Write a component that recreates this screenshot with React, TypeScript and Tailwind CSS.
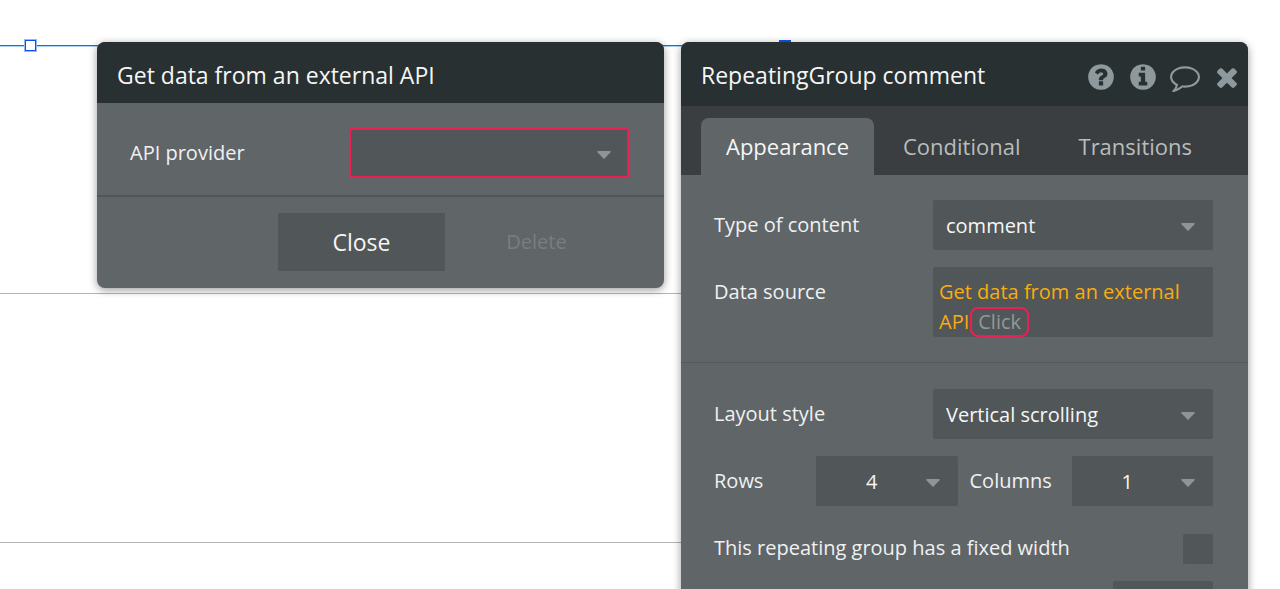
import type { ReactNode } from "react";

const ICONS = {
  help: "M1024 1376v-192q0-14-9-23t-23-9h-192q-14 0-23 9t-9 23v192q0 14 9 23t23 9h192q14 0 23-9t9-23zm256-672q0-88-55.5-163t-138.5-116-170-41q-243 0-371 213-15 24 8 42l132 100q7 6 19 6 16 0 25-12 53-68 86-92 34-24 86-24 48 0 85.5 26t37.5 59q0 38-20 61t-68 45q-63 28-115.5 86.5t-52.5 125.5v36q0 14 9 23t23 9h192q14 0 23-9t9-23q0-19 21.5-49.5t54.5-49.5q32-18 49-28.5t46-35 44.5-48 28-60.5 12.5-81zm384 192q0 209-103 385.5t-279.5 279.5-385.5 103-385.5-103-279.5-279.5-103-385.5 103-385.5 279.5-279.5 385.5-103 385.5 103 279.5 279.5 103 385.5z",
  info: "M1152 1376v-160q0-14-9-23t-23-9h-96v-512q0-14-9-23t-23-9h-320q-14 0-23 9t-9 23v160q0 14 9 23t23 9h96v320h-96q-14 0-23 9t-9 23v160q0 14 9 23t23 9h448q14 0 23-9t9-23zm-128-896v-160q0-14-9-23t-23-9h-192q-14 0-23 9t-9 23v160q0 14 9 23t23 9h192q14 0 23-9t9-23zm640 416q0 209-103 385.5t-279.5 279.5-385.5 103-385.5-103-279.5-279.5-103-385.5 103-385.5 279.5-279.5 385.5-103 385.5 103 279.5 279.5 103 385.5z",
  comment:
    "M896 384q-204 0-381.5 69.5t-282 187.5-104.5 255q0 112 71.5 213.5t201.5 175.5l87 50-27 96q-24 91-70 172 152-63 275-171l43-38 57 6q69 8 130 8 204 0 381.5-69.5t282-187.5 104.5-255-104.5-255-282-187.5-381.5-69.5zm896 512q0 174-120 321.5t-326 233-450 85.5q-70 0-145-8-198 175-460 242-49 14-114 22h-5q-15 0-27-10.5t-16-27.5v-1q-3-4-.5-12t2-10 4.5-9.5l6-9 7-8.5 8-9q7-8 31-34.5t34.5-38 31-39.5 32.5-51 27-59 26-76q-157-89-247.5-220t-90.5-281q0-174 120-321.5t326-233 450-85.5 450 85.5 326 233 120 321.5z",
  close:
    "M1490 1322q0 40-28 68l-136 136q-28 28-68 28t-68-28l-294-294-294 294q-28 28-68 28t-68-28l-136-136q-28-28-28-68t28-68l294-294-294-294q-28-28-28-68t28-68l136-136q28-28 68-28t68 28l294 294 294-294q28-28 68-28t68 28l136 136q28 28 28 68t-28 68l-294 294 294 294q28 28 28 68z",
};

function IconButton({ label, path }: { label: string; path: string }) {
  return (
    <button type="button" aria-label={label} className="text-[#8d999d]">
      <svg viewBox="0 0 1792 1792" className="block size-[30px] fill-current" aria-hidden="true">
        <path d={path} />
      </svg>
    </button>
  );
}

function Dropdown({
  id,
  options,
  centered = false,
  invalid = false,
}: {
  id: string;
  options: string[];
  centered?: boolean;
  invalid?: boolean;
}) {
  return (
    <div className="relative w-full">
      <select
        id={id}
        aria-invalid={invalid}
        className={`block h-[50px] w-full appearance-none rounded-xs bg-[#515658] pt-0.5 text-xl text-[#f5f6f6] ${
          invalid ? "border-2 border-[#ec1f55]" : ""
        } ${centered ? "pr-[30px] text-center [text-align-last:center]" : "pr-12 pl-[13px]"}`}
      >
        {options.map((option) => (
          <option key={option}>{option}</option>
        ))}
      </select>
      <svg
        viewBox="0 0 14 8"
        className="pointer-events-none absolute top-[23px] right-[18px] h-2 w-3.5 fill-[#8f9597]"
        aria-hidden="true"
      >
        <path d="M1 0h12q1.2.2.5 1.2L7.6 7.6q-.6.6-1.2 0L.5 1.2Q-.2.2 1 0z" />
      </svg>
    </div>
  );
}

function Field({ id, label, children }: { id: string; label: string; children: ReactNode }) {
  return (
    <div className="flex items-start justify-between">
      <label htmlFor={id} className="leading-[50px]">
        {label}
      </label>
      <div className="w-[280px]">{children}</div>
    </div>
  );
}

function CanvasGroup() {
  return (
    <div className="absolute inset-0 -z-10" aria-hidden="true">
      <div className="absolute top-[45px] left-0 h-0.5 w-[790px] border-b border-[#a9d0f6] bg-[#0f74dc]" />
      <div className="absolute top-10 left-[25px] size-[11px] border border-[#0d4ff5] bg-white outline outline-[#8fbcf7]" />
      <div className="absolute top-10 left-[779px] size-3 bg-[#0d57f5]" />
      <div className="absolute top-[293px] left-0 h-px w-[790px] bg-[#b4b4b4]" />
      <div className="absolute top-[542px] left-0 h-px w-[790px] bg-[#b4b4b4]" />
    </div>
  );
}

function ApiDialog() {
  return (
    <section className="min-w-0 flex-1 overflow-hidden rounded-lg bg-[#606568] shadow-[0_2px_9px_rgba(0,0,0,0.4)]">
      <header className="bg-[#283032] px-5 pt-[17px] pb-3">
        <h2 className="text-[23px] leading-8 text-[#f5f6f6]">Get data from an external API</h2>
      </header>
      <div className="flex flex-col border-b-2 border-[#515658] pt-[25px] pr-[35px] pb-[17px] pl-[33px]">
        <Field id="provider" label="API provider">
          <Dropdown id="provider" options={[""]} invalid />
        </Field>
      </div>
      <div className="flex justify-end gap-2 pt-4 pr-11 pb-[17px]">
        <button type="button" className="h-[58px] w-[167px] bg-[#515658] text-[23px] text-[#f5f6f6]">
          Close
        </button>
        <button type="button" disabled className="h-[58px] w-[167px] text-xl text-[#7b7d7e]">
          Delete
        </button>
      </div>
    </section>
  );
}

function PropertyEditor() {
  return (
    <section className="min-w-0 flex-1 overflow-hidden rounded-lg bg-[#606568] pb-6 shadow-[0_2px_9px_rgba(0,0,0,0.4)]">
      <header className="flex items-start justify-between bg-[#283032] pt-[17px] pr-1.5 pb-3.5 pl-5">
        <h2 className="text-[23px] leading-8 text-[#f5f6f6]">RepeatingGroup comment</h2>
        <div className="flex gap-3 pt-[3px]">
          <IconButton label="Help" path={ICONS.help} />
          <IconButton label="Info" path={ICONS.info} />
          <IconButton label="Comment" path={ICONS.comment} />
          <IconButton label="Close" path={ICONS.close} />
        </div>
      </header>
      <div role="tablist" className="flex bg-[#3a3e40] px-5 pt-3 text-[22px] text-[#b9bcbd]">
        <button
          type="button"
          role="tab"
          aria-selected="true"
          className="h-[57px] rounded-t-lg bg-[#606568] px-[25px] text-[#f5f6f6]"
        >
          Appearance
        </button>
        <button type="button" role="tab" aria-selected="false" className="h-[57px] px-[29px]">
          Conditional
        </button>
        <button type="button" role="tab" aria-selected="false" className="h-[57px] px-[29px]">
          Transitions
        </button>
      </div>
      <div className="flex flex-col gap-[17px] pt-[25px] pr-[35px] pb-[25px] pl-[33px]">
        <Field id="content-type" label="Type of content">
          <Dropdown id="content-type" options={["comment"]} />
        </Field>
        <Field id="data-source" label="Data source">
          <button
            id="data-source"
            type="button"
            className="block h-[70px] w-full rounded-xs bg-[#515658] pt-2.5 pl-1.5 text-left leading-[30px] text-[#f9ac10]"
          >
            <span>Get data from an external API</span>
            <span className="ml-px inline-block h-[30px] rounded-lg border-2 border-[#ec1f55] px-1.5 align-top leading-[26px] text-[#949899]">
              Click
            </span>
          </button>
        </Field>
      </div>
      <hr className="border-[#54595b]" />
      <div className="flex flex-col gap-[17px] pt-[26px] pr-[35px] pl-[33px]">
        <Field id="layout" label="Layout style">
          <Dropdown id="layout" options={["Vertical scrolling"]} />
        </Field>
        <div className="flex justify-between leading-[50px]">
          <label htmlFor="rows" className="w-[102px]">
            Rows
          </label>
          <div className="min-w-0 flex-1">
            <Dropdown id="rows" options={["4"]} centered />
          </div>
          <label htmlFor="columns" className="w-[114px] pl-3">
            Columns
          </label>
          <div className="min-w-0 flex-1">
            <Dropdown id="columns" options={["1"]} centered />
          </div>
        </div>
        <div className="flex items-start justify-between pt-[11px]">
          <label htmlFor="fixed-width" className="leading-7">
            This repeating group has a fixed width
          </label>
          <input id="fixed-width" type="checkbox" className="size-[30px] appearance-none rounded-xs bg-[#515658]" />
        </div>
        <div className="flex justify-end">
          <input
            type="text"
            aria-label="Minimum width"
            className="h-[50px] w-[100px] rounded-xs bg-[#515658] px-3 text-xl"
          />
        </div>
      </div>
    </section>
  );
}

export default function App() {
  return (
    <main className="relative isolate flex h-screen items-start gap-[17px] overflow-hidden bg-white pt-[42px] pr-8 pl-[97px] font-['Open_Sans',sans-serif] text-xl text-[#f0f1f1]">
      <CanvasGroup />
      <ApiDialog />
      <PropertyEditor />
    </main>
  );
}
